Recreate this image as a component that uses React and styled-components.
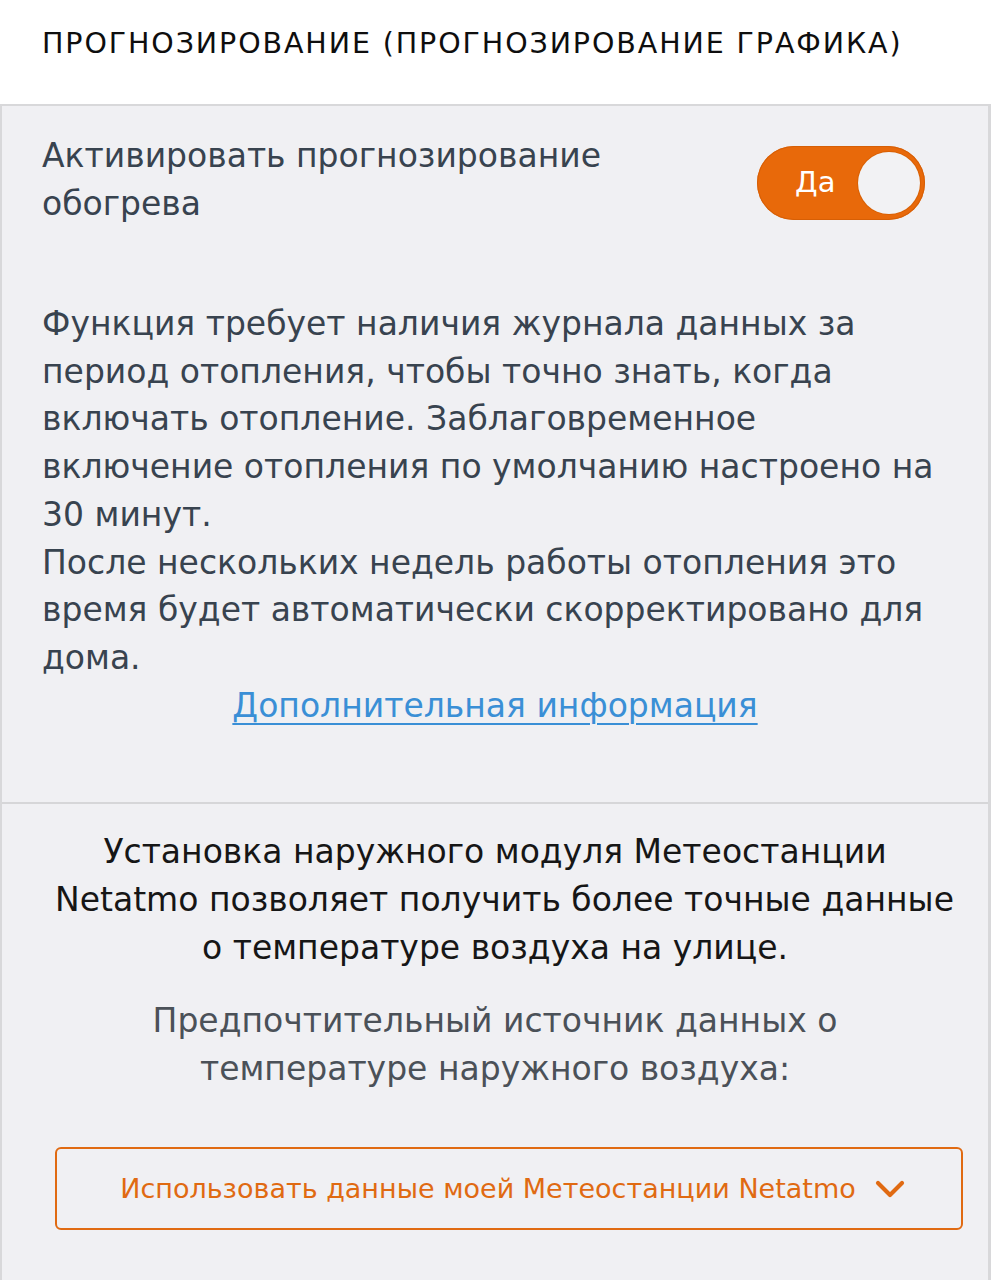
import React from "react";
import styled, { createGlobalStyle } from "styled-components";

const Global = createGlobalStyle`
  html, body {
    margin: 0;
    padding: 0;
    background: #ffffff;
  }
  body {
    font-family: "DejaVu Sans", "Noto Sans", sans-serif;
  }
`;

export default function App() {
    return (
        <>
            <Global />
            <Page>
                <Header>ПРОГНОЗИРОВАНИЕ (ПРОГНОЗИРОВАНИЕ ГРАФИКА)</Header>
                <Panel>
                    <Section>
                        <ToggleRow>
                            <Label>
                                Активировать прогнозирование
                                <br />
                                обогрева
                            </Label>
                            <Toggle>
                                <ToggleText>Да</ToggleText>
                                <Knob />
                            </Toggle>
                        </ToggleRow>
                        <Description>
                            Функция требует наличия журнала данных за
                            <br />
                            период отопления, чтобы точно знать, когда
                            <br />
                            включать отопление. Заблаговременное
                            <br />
                            включение отопления по умолчанию настроено на
                            <br />
                            30 минут.
                            <br />
                            После нескольких недель работы отопления это
                            <br />
                            время будет автоматически скорректировано для
                            <br />
                            дома.
                        </Description>
                        <MoreLink href="#">Дополнительная информация</MoreLink>
                    </Section>
                    <Section bottom>
                        <Note>
                            Установка наружного модуля Метеостанции
                            <br />
                            Netatmo позволяет получить более точные данные
                            <br />
                            о температуре воздуха на улице.
                        </Note>
                        <SubNote>
                            Предпочтительный источник данных о
                            <br />
                            температуре наружного воздуха:
                        </SubNote>
                        <Select>
                            Использовать данные моей Метеостанции Netatmo
                            <svg width="32" height="22" viewBox="0 0 32 22">
                                <path d="M4 5 L16 17 L28 5" fill="none" stroke="#e06a12" strokeWidth="4.2" strokeLinecap="round" strokeLinejoin="round" />
                            </svg>
                        </Select>
                    </Section>
                </Panel>
            </Page>
        </>
    );
}

const Page = styled.div`
    width: 991px;
    min-height: 1280px;
    display: flex;
    flex-direction: column;
`;

const Header = styled.div`
    height: 104px;
    box-sizing: border-box;
    padding: 26px 0 0 42px;
    font-size: 28.5px;
    line-height: 36px;
    letter-spacing: 1.9px;
    color: #0e0e0e;
    white-space: nowrap;
`;

const Panel = styled.div`
    flex: 1;
    background: #f0f0f3;
    border-top: 2px solid #d8d8da;
    border-left: 2px solid #d8d8da;
    border-right: 3px solid #d8d8da;
    display: flex;
    flex-direction: column;
`;

const Section = styled.div`
    display: flex;
    flex-direction: column;
    padding: ${(p) => (p.bottom ? "24px 25px 0 53px" : "26px 0 0 40px")};
    height: ${(p) => (p.bottom ? "auto" : "698px")};
    box-sizing: border-box;
    border-bottom: ${(p) => (p.bottom ? "none" : "2px solid #d6d6d8")};
    align-items: ${(p) => (p.bottom ? "stretch" : "flex-start")};
    white-space: nowrap;
`;

const ToggleRow = styled.div`
    display: flex;
    justify-content: space-between;
    align-items: flex-start;
    width: 883px;
`;

const Label = styled.div`
    font-size: 33px;
    line-height: 48px;
    color: #38434f;
`;

const Toggle = styled.div`
    margin-top: 14px;
    width: 168px;
    height: 74px;
    box-sizing: border-box;
    border-radius: 37px;
    background: #e8690a;
    display: flex;
    align-items: center;
    justify-content: space-between;
    padding: 0 5px 0 38px;
    box-shadow: inset 0 0 0 1px #d65f06;
`;

const ToggleText = styled.span`
    color: #ffffff;
    font-size: 29px;
    margin-top: -2px;
`;

const Knob = styled.span`
    width: 62px;
    height: 62px;
    border-radius: 50%;
    background: #f2f2f4;
    box-shadow: 0 0 0 1px #d86004;
`;

const Description = styled.p`
    margin: 72px 0 0;
    font-size: 33px;
    line-height: 47.7px;
    color: #38434f;
`;

const MoreLink = styled.a`
    align-self: center;
    margin: 0 0 0 -40px;
    font-size: 33px;
    line-height: 48px;
    color: #3a8fd6;
    text-decoration: underline;
    text-decoration-thickness: 2px;
    text-underline-offset: 6px;
`;

const Note = styled.p`
    margin: 0 28px 0 0;
    text-align: center;
    font-size: 33px;
    line-height: 48px;
    color: #161616;
`;

const SubNote = styled.p`
    margin: 25px 28px 0 0;
    text-align: center;
    font-size: 33px;
    line-height: 48px;
    color: #4b5158;
`;

const Select = styled.div`
    margin-top: 54px;
    height: 83px;
    box-sizing: border-box;
    border: 2px solid #e06a12;
    border-radius: 6px;
    display: flex;
    align-items: center;
    justify-content: center;
    gap: 18px;
    padding-left: 8px;
    font-size: 27px;
    color: #e06a12;
`;
